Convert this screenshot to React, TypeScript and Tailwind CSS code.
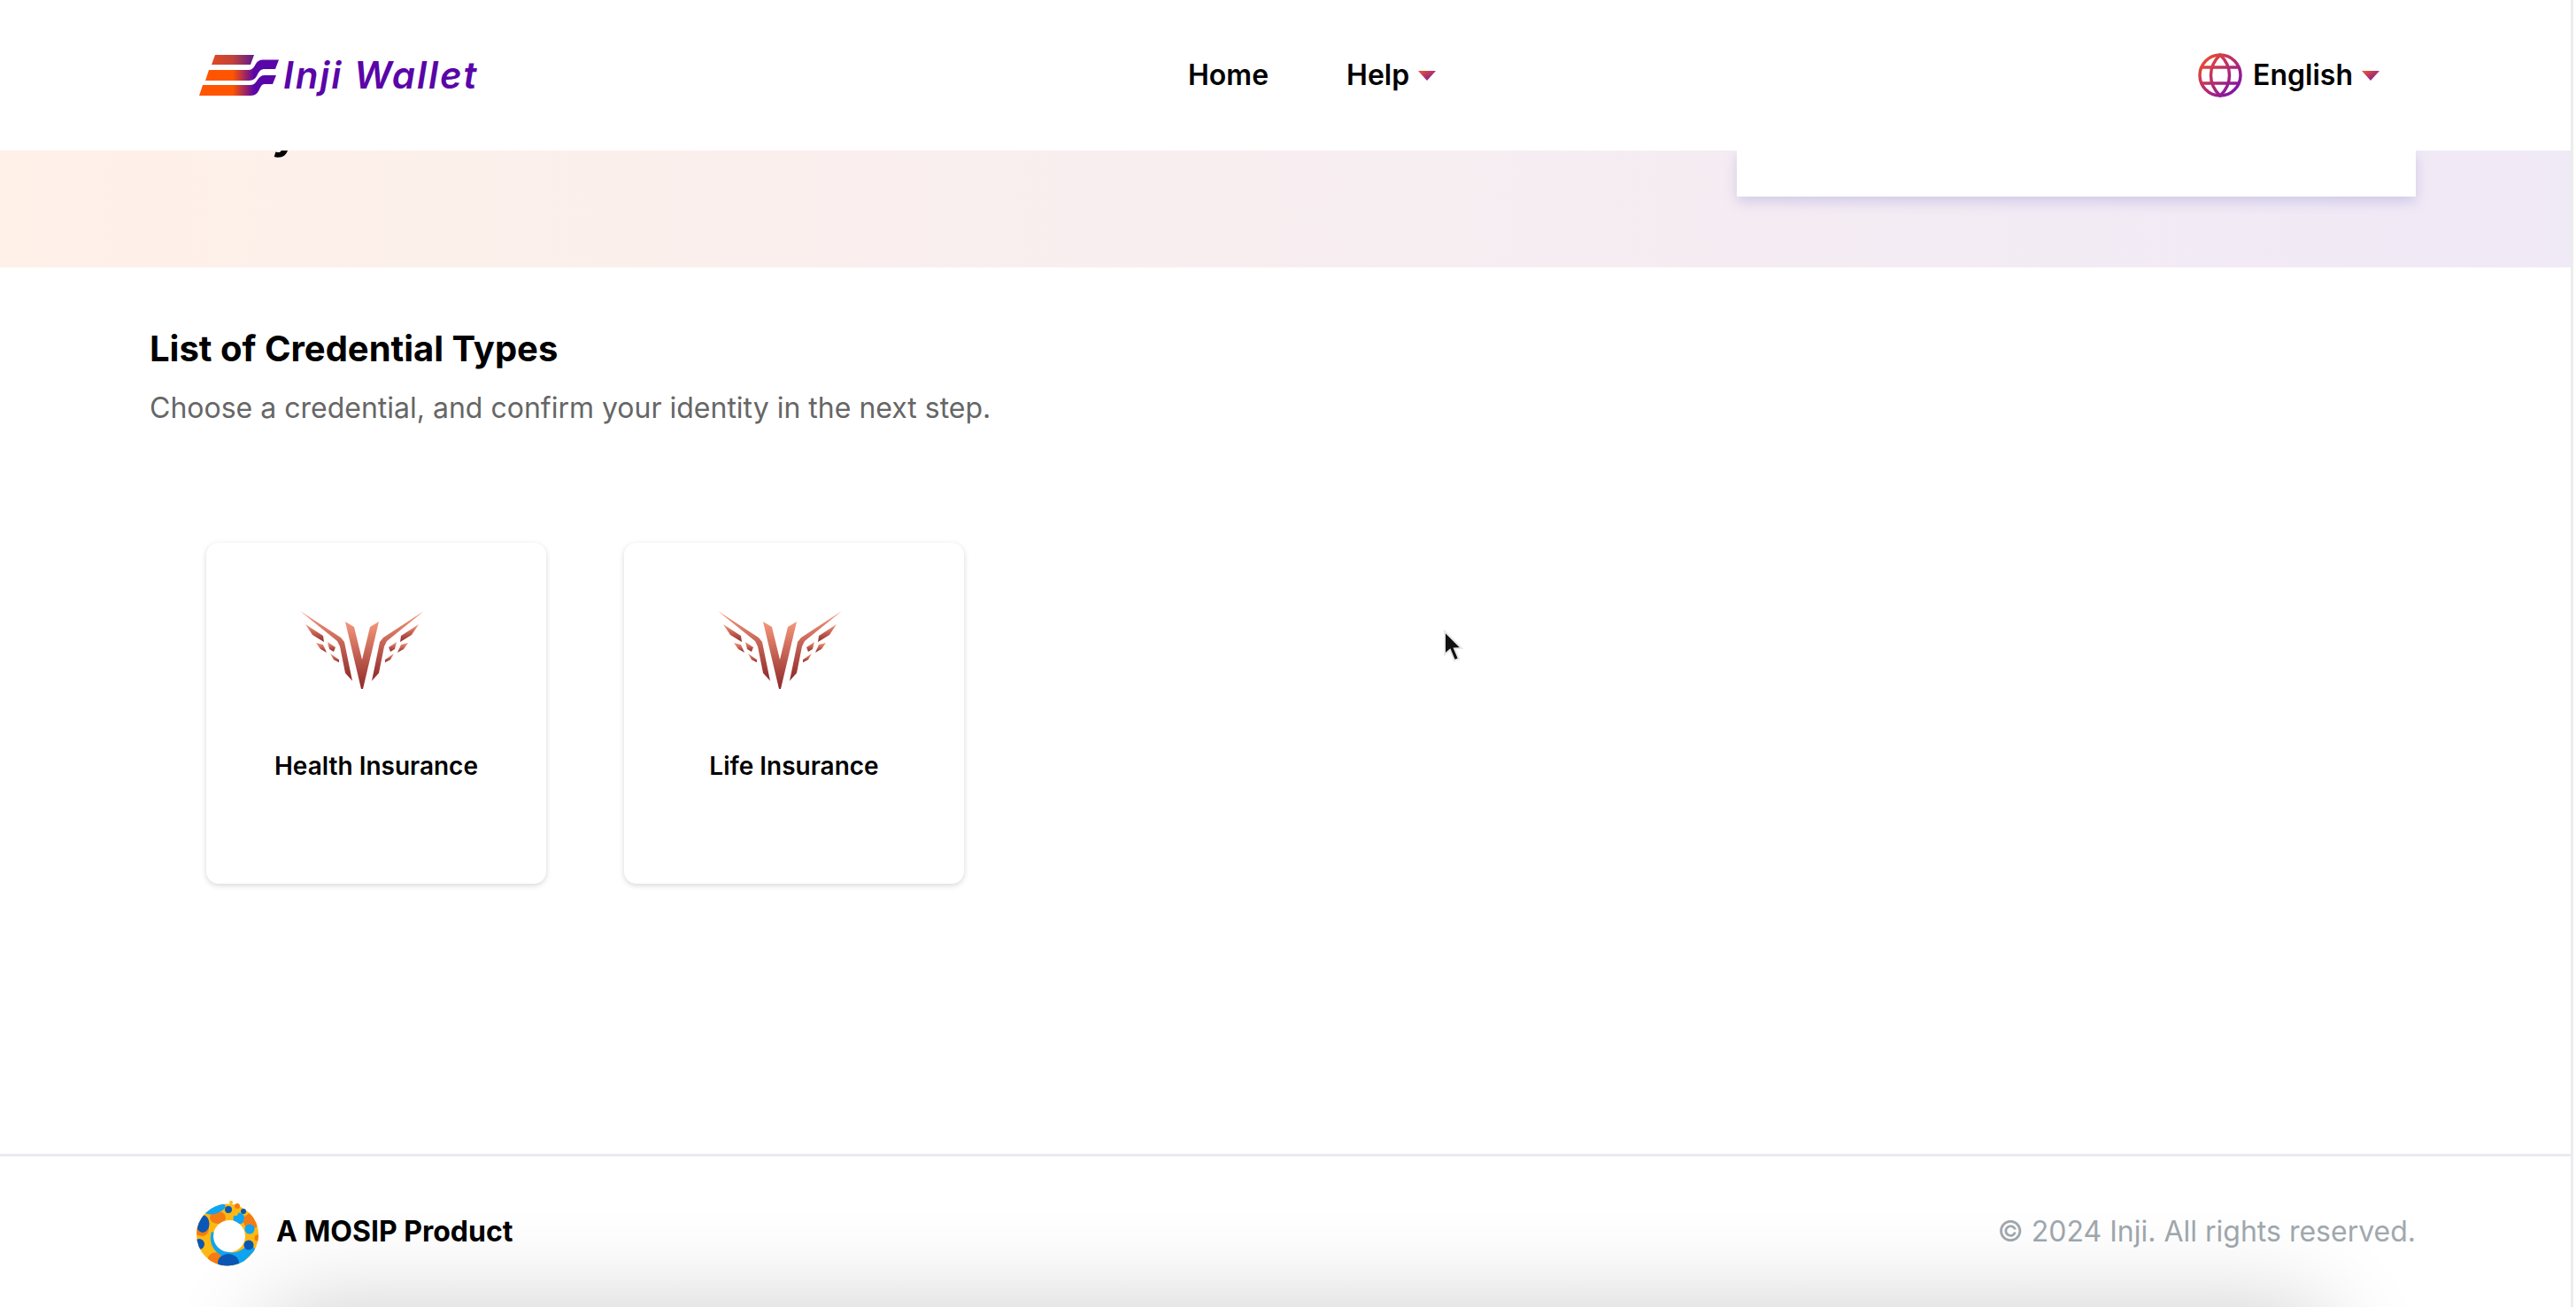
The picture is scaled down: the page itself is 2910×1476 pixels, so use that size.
const Caret = ({ id }: { id: string }) => (
  <svg width="20" height="11" viewBox="0 0 20 11" className="shrink-0">
    <defs>
      <linearGradient id={id} x1="0" y1="0" x2="1" y2="1">
        <stop offset="0" stopColor="#f0592b" />
        <stop offset="1" stopColor="#6f0fa8" />
      </linearGradient>
    </defs>
    <path d="M0 0H20L10 11Z" fill={`url(#${id})`} />
  </svg>
);

const InjiMark = () => (
  <svg width="90" height="47" viewBox="0 0 90 47" className="shrink-0">
    <defs>
      <linearGradient id="bar1" gradientUnits="userSpaceOnUse" x1="14" y1="0" x2="62" y2="0">
        <stop offset="0" stopColor="#e2481f" />
        <stop offset="0.5" stopColor="#c2423a" />
        <stop offset="1" stopColor="#5c1a90" />
      </linearGradient>
      <linearGradient id="bar2" gradientUnits="userSpaceOnUse" x1="38" y1="0" x2="62" y2="0">
        <stop offset="0" stopColor="#ff5500" />
        <stop offset="1" stopColor="#5a05a8" />
      </linearGradient>
    </defs>
    <path d="M18 0H62L58 11H14Z" fill="url(#bar1)" />
    <path d="M11 17H56C60 17 62 14 64 10C66 7 68 5.5 72 5.5H90L86 16H74C70 16 68 18 66 22C64 26 62 29 56 29H7Z" fill="url(#bar2)" />
    <path d="M4 34H58C62 34 64 31 66 28C68 25 70 23 74 23H87L83 33H74C71 33 70 35 68 39C66 43 64 46 58 46H0Z" fill="url(#bar2)" />
  </svg>
);

const Wings = ({ id }: { id: string }) => (
  <svg width="140" height="88" viewBox="0 0 140 88" className="block">
    <defs>
      <linearGradient id={id} x1="0" y1="0" x2="0" y2="1">
        <stop offset="0" stopColor="#f5967a" />
        <stop offset="1" stopColor="#8f2a2a" />
      </linearGradient>
    </defs>
    <g fill={`url(#${id})`}>
      <path d="M0 0L46 30L50 35L59 79L51 70L45 40L42 34Z" />
      <path d="M140 0L94 30L90 35L81 79L89 70L95 40L98 34Z" />
      <path d="M51 12L61 18L70 55L79 18L89 12L71 88H69Z" />
      <path d="M6 15L26 28L27 35L14 27Z" />
      <path d="M134 15L114 28L113 35L126 27Z" />
      <path d="M18 36L26 38L30 47L23 43Z" />
      <path d="M122 36L114 38L110 47L117 43Z" />
      <path d="M31 35L40 41L38 46L33 43Z" />
      <path d="M109 35L100 41L102 46L107 43Z" />
      <path d="M34 48L44 55V58L38 55Z" />
      <path d="M106 48L96 55V58L102 55Z" />
    </g>
  </svg>
);

const Card = ({ title, id }: { title: string; id: string }) => (
  <div className="flex h-[385px] w-[384px] flex-col items-center rounded-[14px] bg-white shadow-[0_2px_6px_rgba(0,0,0,0.16)]">
    <div className="w-full pl-[106px] pt-[77px]">
      <Wings id={id} />
    </div>
    <div className="mt-[70px] text-[28px] font-semibold leading-[34px] text-black">{title}</div>
  </div>
);

const Mosip = () => (
  <svg width="72" height="80" viewBox="0 0 72 80" className="shrink-0">
    <defs>
      <clipPath id="ring">
        <path clipRule="evenodd" d="M36 8.5A35 35 0 1 0 36.01 78.5A35 35 0 1 0 36 8.5ZM38 27A18 18 0 1 1 37.99 63A18 18 0 1 1 38 27Z" />
      </clipPath>
    </defs>
    <g clipPath="url(#ring)">
      <rect width="72" height="80" fill="#fdb913" />
      <ellipse cx="7" cy="37" rx="8" ry="8" fill="#f57c13" />
      <ellipse cx="25" cy="24" rx="9" ry="7" fill="#f57c13" />
      <ellipse cx="22" cy="14" rx="12" ry="5.5" transform="rotate(-18 22 14)" fill="#0ea5f5" />
      <ellipse cx="8" cy="31" rx="7.5" ry="10" fill="#0b57b5" />
      <circle cx="37" cy="23" r="3" fill="#fdb913" />
      <circle cx="49" cy="25" r="6.5" fill="#0ea5f5" />
      <circle cx="63" cy="28" r="9" fill="#f57c13" />
      <circle cx="61" cy="37" r="5.5" fill="#0ea5f5" />
      <circle cx="70" cy="47" r="3.5" fill="#f57c13" />
      <path d="M18 40C14 52 20 62 32 70L50 78L68 60L60 52C52 66 34 68 26 54C24 50 23 46 24 42Z" fill="#0ea5f5" />
      <circle cx="60" cy="55" r="5.5" fill="#0b57b5" />
      <circle cx="4" cy="54" r="6" fill="#0b57b5" />
      <circle cx="22" cy="72" r="8.5" fill="#f57c13" />
      <ellipse cx="37" cy="75" rx="12" ry="10" fill="#0b57b5" />
    </g>
    <circle cx="37" cy="15" r="4" fill="#0b57b5" />
    <circle cx="47" cy="11" r="3" fill="#f57c13" />
    <circle cx="40" cy="7" r="2" fill="#fdb913" />
    <circle cx="45" cy="19" r="3" fill="#fdb913" />
    <circle cx="54" cy="17" r="3" fill="#0b57b5" />
  </svg>
);

export default function App() {
  return (
    <div className="relative h-[1476px] w-[2910px] overflow-hidden bg-white font-['Inter','Liberation_Sans',sans-serif] text-black">
      <div className="flex h-full w-[2904px] flex-col">
        <header className="relative z-10 flex h-[170px] shrink-0 items-center bg-white pl-[225px] pr-[216px]">
          <div className="flex w-[1117px] items-center gap-[5px]">
            <InjiMark />
            <span className="text-[42px] font-semibold italic leading-none tracking-[2px] text-[#5a05a8]">Inji Wallet</span>
          </div>
          <nav className="flex items-center gap-[88px] text-[32px] font-semibold">
            <span>Home</span>
            <span className="flex items-center gap-[10px]">Help <Caret id="c1" /></span>
          </nav>
          <div className="ml-auto flex items-center gap-[12px] text-[32px] font-semibold">
            <svg width="50" height="50" viewBox="0 0 50 50" fill="none" stroke="url(#globe)" strokeWidth="3.5">
              <defs>
                <linearGradient id="globe" gradientUnits="userSpaceOnUse" x1="5" y1="5" x2="45" y2="45">
                  <stop offset="0" stopColor="#ef4b2a" />
                  <stop offset="1" stopColor="#7a0fb0" />
                </linearGradient>
              </defs>
              <circle cx="25" cy="25" r="23" />
              <path d="M25 2C11 15 11 35 25 48C39 35 39 15 25 2Z" />
              <path d="M4 16H46M4 34H46" />
            </svg>
            <span className="flex items-center gap-[10px]">English <Caret id="c2" /></span>
          </div>
        </header>

        <section className="flex h-[132px] shrink-0 justify-between bg-[linear-gradient(90deg,#fff0e8_0%,#fcf0eb_18%,#f6edf2_60%,#f0e9f6_100%)] pl-[169px] pr-[175px]">
          <div className="-mt-[52px] text-[56px] font-semibold leading-[56px] text-black">Safely</div>
          <div className="h-[52px] w-[767px] bg-white shadow-[0_6px_14px_rgba(90,80,190,0.22)]" />
        </section>

        <main className="flex-1 px-[169px] pt-[68px]">
          <h1 className="text-[40px] font-bold leading-[48px]">List of Credential Types</h1>
          <p className="mt-[23px] text-[32px] leading-[40px] text-[#666666]">Choose a credential, and confirm your identity in the next step.</p>
          <div className="mt-[132px] flex gap-[88px] pl-[64px]">
            <Card title="Health Insurance" id="w1" />
            <Card title="Life Insurance" id="w2" />
          </div>
        </main>

        <footer className="flex h-[173px] shrink-0 items-center justify-between border-t-[3px] border-[#e8eaef] bg-white pl-[221px] pr-[175px]">
          <div className="flex items-center gap-[19px] text-[32px] font-bold">
            <Mosip />
            A MOSIP Product
          </div>
          <div className="text-[32px] text-[#a0a8ae]">© 2024 Inji. All rights reserved.</div>
        </footer>
      </div>

      <div className="absolute bottom-[-200px] left-[300px] h-[200px] w-[2330px] rounded-[40px] shadow-[0_0_110px_0_rgba(0,0,0,0.2)]" />
      <div className="absolute right-0 top-0 h-full w-[6px] border-l-[3px] border-[#ececec] bg-white" />

      <svg width="26" height="38" viewBox="0 0 26 38" className="absolute left-[1629px] top-[711px]">
        <path d="M3 2L3 28L9 23L14 35L19 33L14 21.5L22 21Z" fill="#111" stroke="#e8e8e8" strokeWidth="2" />
      </svg>
    </div>
  );
}
